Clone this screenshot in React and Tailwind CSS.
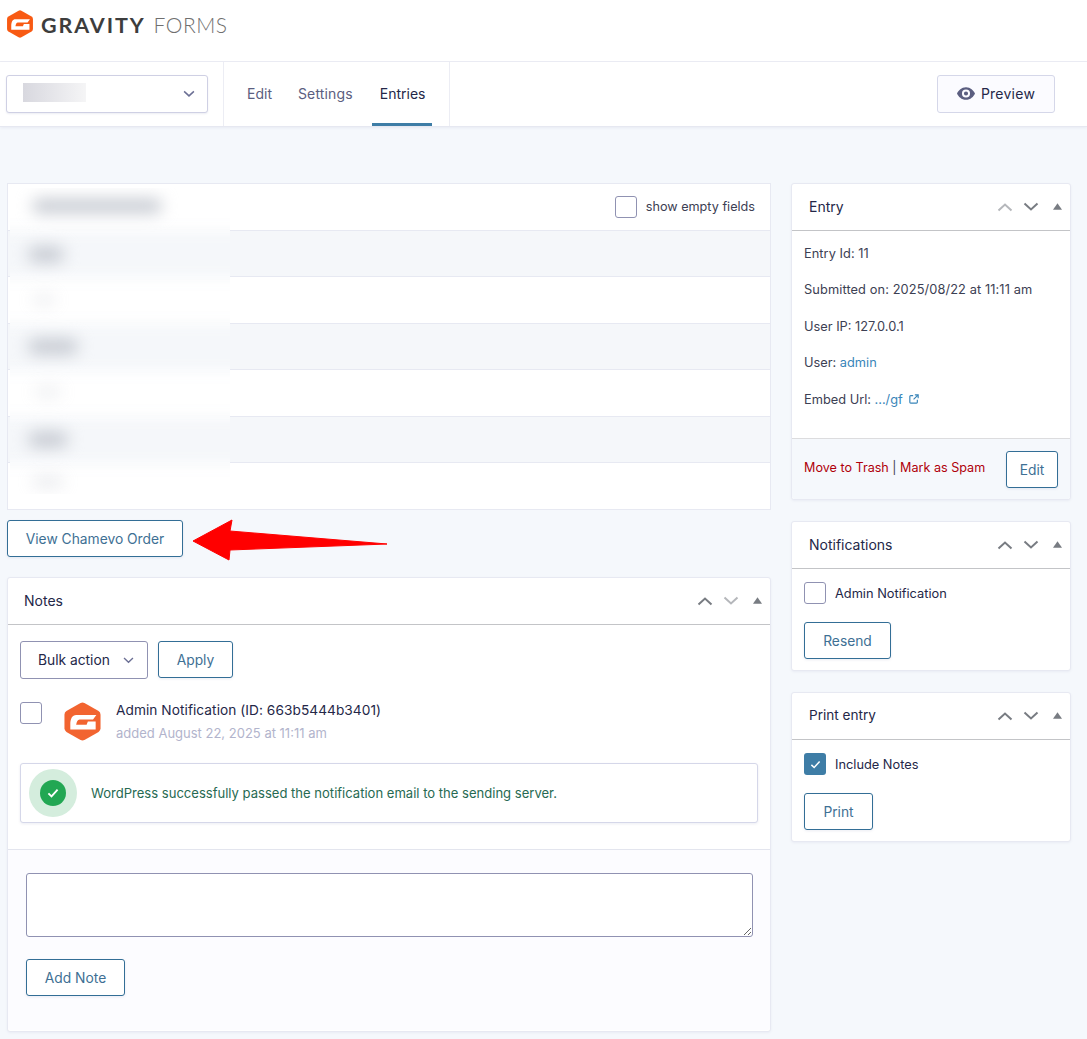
import React from "react";

const Logo = ({ className, fill = "#f26430" }) => (
  <svg viewBox="0 0 37 40" className={className}>
    <path d="M16.500 1 Q18.500 0 20.500 1 L35 9.300 Q37 10.500 37 13 V27 Q37 29.500 35 30.700 L20.500 39 Q18.500 40 16.500 39 L2 30.700 Q0 29.500 0 27 V13 Q0 10.500 2 9.300 Z" fill={fill} />
    <path d="M6 28.300 V23 C6 17 8 13.300 12 13.300 H32.700 L29.300 18 H15.500 C13.500 18 12.500 20.500 12 23.300 H22.700 L24 20 H32 V28.300 Z" fill="#fff" />
  </svg>
);

const Chevron = ({ up, className }) => (
  <svg viewBox="0 0 16 10" className={className} fill="none" stroke="currentColor" strokeWidth="2">
    <path d={up ? "M1.500 8.500 L8 2.500 L14.500 8.500" : "M1.500 1.500 L8 7.500 L14.500 1.500"} />
  </svg>
);

const PanelHead = ({ title, upFaded, downFaded, pad = "pl-[16px]", size = "text-[14px]" }) => (
  <div className={`flex h-[47px] items-center border-b border-[#c3c4c7] pr-[8px] ${pad}`}>
    <span className={`mb-[1px] flex-1 text-[#242748] ${size}`}>{title}</span>
    <Chevron up className={`mr-[10px] h-[10px] w-[16px] ${upFaded ? "text-[#b5b7bb]" : "text-[#787c82]"}`} />
    <Chevron className={`mr-[14px] h-[10px] w-[16px] ${downFaded ? "text-[#b5b7bb]" : "text-[#787c82]"}`} />
    <svg viewBox="0 0 10 7" className="mb-[2px] h-[7px] w-[9px] text-[#787c82]"><path d="M5 0 L10 7 H0 Z" fill="currentColor" /></svg>
  </div>
);

const Btn = ({ children, className = "" }) => (
  <button className={`flex h-[37px] items-center justify-center rounded-[3px] border border-[#336e96] bg-white pt-[1px] text-[13.800px] text-[#3e7094] shadow-[0_1px_3px_rgba(18,25,97,0.08)] ${className}`}>
    {children}
  </button>
);

const Box = () => <span className="block h-[22px] w-[22px] shrink-0 rounded-[3px] border border-[#9092b2] bg-white" />;

const Panel = ({ className = "", children }) => (
  <section className={`rounded-[3px] border border-[#e7e9f2] bg-white shadow-[0_1px_3px_rgba(18,25,97,0.05)] ${className}`}>{children}</section>
);

const Smear = ({ className }) => <div className={`absolute rounded-full bg-[#c4c8d0] blur-[8px] ${className}`} />;
const BlurRow = ({ className }) => <div className={`absolute -left-[20px] h-[47px] w-[300px] bg-[#f5f7fa] blur-[7px] ${className}`} />;

export default function App() {
  return (
    <div className="relative h-[1039px] w-[1087px] overflow-hidden bg-[#f5f8fc] font-['Inter',sans-serif] text-[12.800px] text-[#242748]">
      <header className="flex h-[62px] items-start border-b border-[#ecedf4] bg-white pl-[7px] pt-[10px]">
        <Logo className="h-[28px] w-[26px]" fill="#f85a13" />
        <span className="ml-[8px] mt-[2px] font-['Lato',sans-serif] text-[21.500px] font-bold leading-[26px] tracking-[1.900px] text-[#3d3d3d]">GRAVITY</span>
        <span className="ml-[8px] mt-[2px] font-['Lato',sans-serif] text-[21px] font-light leading-[26px] tracking-[0.500px] text-[#6f6f6f]">FORMS</span>
      </header>

      <nav className="flex h-[65px] items-stretch border-b border-[#e6e8f1] bg-white shadow-[0_1px_3px_rgba(18,25,97,0.06)]">
        <div className="flex w-[224px] items-center border-r border-[#ecedf4] pl-[6px]">
          <div className="relative flex h-[38px] w-[202px] items-center justify-end rounded-[3px] border border-[#cfd0e4] bg-white pr-[12px] shadow-[0_1px_2px_rgba(18,25,97,0.08)]">
            <div className="absolute left-[16px] top-[7px] h-[19px] w-[63px] bg-gradient-to-r from-[#d8d8df] to-[#f5f5f6]" />
            <Chevron className="h-[8px] w-[12px] text-[#6b6f94]" />
          </div>
        </div>
        <div className="flex w-[226px] items-stretch border-r border-[#ecedf4] pb-[1px] pl-[23px] text-[14px] text-[#5b5e80]">
          <a className="flex items-center">Edit</a>
          <a className="ml-[26px] flex items-center tracking-[0.150px]">Settings</a>
          <a className="relative ml-[27px] flex items-center text-[#242748]">
            Entries
            <span className="absolute -left-[8px] -right-[7px] -bottom-[1px] h-[3px] bg-[#3e7da6]" />
          </a>
        </div>
        <div className="flex flex-1 items-center justify-end pr-[32px]">
          <button className="flex h-[38px] w-[118px] items-center justify-center gap-[6px] rounded-[3px] border border-[#d5d7e9] bg-[#fbfbff] pb-[1px] text-[14px] tracking-[0.250px] text-[#242748]">
            <svg viewBox="0 0 20 14" className="h-[13px] w-[18px]">
              <path fillRule="evenodd" fill="#5b5e80" d="M10 0C5 0 1.600 3.400 0 7c1.600 3.600 5 7 10 7s8.400-3.400 10-7c-1.600-3.600-5-7-10-7Zm0 11.500a4.500 4.500 0 1 1 0-9 4.500 4.500 0 0 1 0 9Zm0-2.200a2.300 2.300 0 1 0 0-4.600 2.300 2.300 0 0 0 0 4.600Z" />
            </svg>
            Preview
          </button>
        </div>
      </nav>

      <main className="flex gap-[20px] pl-[7px] pt-[56px]">
        <div className="flex w-[764px] flex-col">
          <section className="relative h-[327px] border border-[#e7e9f2] bg-white">
            <div className="flex h-[47px] items-center justify-end border-b border-[#e7e9f2] pr-[15px] text-[#3c4053]">
              <Box />
              <span className="ml-[9px] text-[12.650px]">show empty fields</span>
            </div>
            {[0, 1, 2, 3, 4].map((i) => (
              <div key={i} className={`h-[46.400px] border-b border-[#e7e9f2] ${i % 2 === 0 ? "bg-[#f5f7fa]" : "bg-white"}`} />
            ))}
            <div className="absolute left-[2px] top-[4px] h-[306px] w-[220px] overflow-hidden bg-white">
              <BlurRow className="top-[43px]" />
              <BlurRow className="top-[136px]" />
              <BlurRow className="top-[229px]" />
              <Smear className="left-[22px] top-[11px] h-[14px] w-[130px]" />
              <Smear className="left-[18px] top-[59px] h-[15px] w-[36px]" />
              <Smear className="left-[22px] top-[107px] h-[10px] w-[24px] opacity-30" />
              <Smear className="left-[18px] top-[151px] h-[15px] w-[50px]" />
              <Smear className="left-[24px] top-[199px] h-[10px] w-[28px] opacity-30" />
              <Smear className="left-[18px] top-[244px] h-[15px] w-[40px]" />
              <Smear className="left-[22px] top-[289px] h-[10px] w-[32px] opacity-40" />
            </div>
          </section>

          <Btn className="mt-[10px] w-[176px]">View Chamevo Order</Btn>

          <Panel className="mt-[20px] h-[455px]">
            <PanelHead title="Notes" downFaded />
            <div className="flex gap-[10px] px-[12px] pt-[16px]">
              <div className="flex h-[38px] w-[128px] items-center justify-between rounded-[3px] border border-[#9092b2] bg-white pl-[17px] pr-[13px] pt-[1px] text-[13.800px]">
                Bulk action
                <Chevron className="h-[7px] w-[11px] text-[#6b6f94]" />
              </div>
              <Btn className="w-[75px]">Apply</Btn>
            </div>
            <div className="flex px-[12px] pt-[23px]">
              <Box />
              <Logo className="ml-[22px] h-[39px] w-[37px]" />
              <div className="ml-[15px]">
                <div className="text-[13.700px] leading-[16px] tracking-[0.050px] text-[#242748]">Admin Notification (ID: 663b5444b3401)</div>
                <div className="mt-[8px] text-[13px] leading-[15px] text-[#b2b4cc]">added August 22, 2025 at 11:11 am</div>
              </div>
            </div>
            <div className="mx-[12px] mt-[22px] flex h-[60px] items-center rounded-[3px] border border-[#d5d7e9] bg-white pl-[8px] shadow-[0_1px_3px_rgba(18,25,97,0.08)]">
              <span className="flex h-[48px] w-[48px] items-center justify-center rounded-full bg-[#d4eddd]">
                <span className="flex h-[26px] w-[26px] items-center justify-center rounded-full bg-[#22a753]">
                  <svg viewBox="0 0 14 12" className="h-[10px] w-[12px]" fill="none" stroke="#fff" strokeWidth="2.200"><path d="M1.500 6.500 L5.200 10 L12.500 2" /></svg>
                </span>
              </span>
              <span className="ml-[14px] pt-[1px] text-[13.050px] text-[#276a52]">WordPress successfully passed the notification email to the sending server.</span>
            </div>
            <div className="mt-[26px] h-[181px] rounded-b-[3px] border-t border-[#e3e5ee] bg-[#fcfcff] px-[18px] pt-[23px]">
              <textarea className="block h-[64px] w-[727px] rounded-[3px] border border-[#9092b2] bg-white" />
              <Btn className="mt-[22px] w-[99px]">Add Note</Btn>
            </div>
          </Panel>
        </div>

        <aside className="flex w-[280px] flex-col gap-[21px]">
          <Panel>
            <PanelHead title="Entry" upFaded pad="pl-[17px]" />
            <div className="h-[207px] space-y-[18.500px] px-[12px] pt-[13.500px] leading-[18px] text-[#3c4053]">
              <div className="tracking-[0.050px]">Entry Id: 11</div>
              <div className="tracking-[0.100px]">Submitted on: 2025/08/22 at 11:11 am</div>
              <div>User IP: 127.0.0.1</div>
              <div>User: <a className="text-[#3985b9]">admin</a></div>
              <div className="flex items-center">
                Embed Url:&nbsp;<a className="text-[#3985b9]">.../gf</a>
                <svg viewBox="0 0 12 12" className="mb-[2px] ml-[6px] h-[10px] w-[10px]" fill="none" stroke="#3985b9" strokeWidth="1.400">
                  <path d="M5 2 H2 a1 1 0 0 0-1 1 V10 a1 1 0 0 0 1 1 H9 a1 1 0 0 0 1-1 V7 M7 1 H11 V5 M11 1 L5.500 6.500" />
                </svg>
              </div>
            </div>
            <div className="flex h-[61px] items-start justify-between rounded-b-[3px] border-t border-[#dcdcde] bg-[#f5f8fc] px-[12px] pt-[12px]">
              <div className="mt-[8px] text-[12.600px] text-[#b0000b]">Move to Trash <span className="text-[#3c4053]">|</span> Mark as Spam</div>
              <Btn className="w-[52px]">Edit</Btn>
            </div>
          </Panel>

          <Panel>
            <PanelHead title="Notifications" pad="pl-[17px]" />
            <div className="px-[12px] pb-[11px] pt-[13px]">
              <label className="flex items-center gap-[9px]"><Box /><span className="pt-[1px]">Admin Notification</span></label>
              <Btn className="mt-[18px] w-[87px]">Resend</Btn>
            </div>
          </Panel>

          <Panel>
            <PanelHead title="Print entry" pad="pl-[17px]" size="text-[13.600px]" />
            <div className="px-[12px] pb-[11px] pt-[13px]">
              <label className="flex items-center gap-[9px]">
                <span className="flex h-[22px] w-[22px] items-center justify-center rounded-[3px] bg-[#3e7da6]">
                  <svg viewBox="0 0 14 12" className="h-[9px] w-[11px]" fill="none" stroke="#fff" strokeWidth="2"><path d="M1.500 6.500 L5.200 10 L12.500 2" /></svg>
                </span>
                <span className="pt-[1px]">Include Notes</span>
              </label>
              <Btn className="mt-[18px] w-[69px]">Print</Btn>
            </div>
          </Panel>
        </aside>
      </main>

      <svg viewBox="0 0 200 42" className="absolute left-[191px] top-[519px] h-[42px] w-[200px]">
        <path d="M2 22 L41 1 L39 12 L196 25 L39 31 L38 41 Z" fill="#ff0000" stroke="#ff0000" strokeLinejoin="round" />
      </svg>
    </div>
  );
}
